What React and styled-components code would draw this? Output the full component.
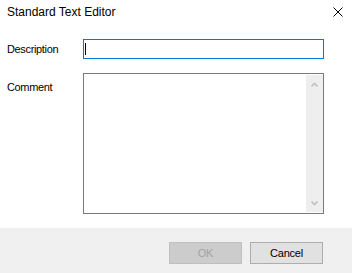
import styled, { createGlobalStyle } from 'styled-components'

const GlobalStyle = createGlobalStyle`
  html, body {
    margin: 0;
    padding: 0;
    background: #fff;
  }
  body {
    font-family: "Liberation Sans", Arial, sans-serif;
    color: #000;
  }
`

const Dialog = styled.div`
  width: 352px;
  height: 273px;
  display: flex;
  flex-direction: column;
  background: #fff;
  overflow: hidden;
`
const Header = styled.div`
  height: 39px;
  display: flex;
  justify-content: space-between;
  align-items: flex-start;
  padding: 4px 9px 0 7px;
  box-sizing: border-box;
`
const Title = styled.div`
  font-size: 12px;
  line-height: 16px;
`
const CloseButton = styled.button`
  border: 0;
  background: none;
  padding: 0;
  margin-top: 3px;
  width: 10px;
  height: 10px;
  display: flex;
  cursor: pointer;
`
const Body = styled.div`
  flex: 1;
  display: grid;
  grid-template-columns: 76px 241px;
  grid-template-rows: 20px 141px;
  row-gap: 14px;
  padding: 0 0 0 7px;
`
const Label = styled.label`
  font-size: 11px;
  letter-spacing: -0.35px;
  line-height: 13px;
  align-self: ${p => (p.$top ? 'start' : 'center')};
  margin-top: ${p => (p.$top ? '8px' : '0')};
`
const InputBox = styled.div`
  display: flex;
  align-items: center;
  border: 1px solid #0078d7;
  box-sizing: border-box;
  height: 20px;
  padding-left: 1px;
`
const Caret = styled.span`
  width: 1px;
  height: 12px;
  background: #000;
`
const Input = styled.input`
  flex: 1;
  min-width: 0;
  border: 0;
  outline: none;
  padding: 0 2px;
  font: 11px "Liberation Sans", Arial, sans-serif;
  caret-color: transparent;
  background: transparent;
`
const TextBox = styled.div`
  display: flex;
  border: 1px solid #7a7a7a;
  box-sizing: border-box;
  height: 141px;
`
const TextArea = styled.textarea`
  flex: 1;
  border: 0;
  outline: none;
  resize: none;
  padding: 2px;
  font: 11px "Liberation Sans", Arial, sans-serif;
`
const ScrollTrack = styled.div`
  width: 17px;
  margin: 1px 0 1px 0;
  background: #eeeeee;
  display: flex;
  flex-direction: column;
  justify-content: space-between;
  align-items: center;
  padding: 7px 0 6px;
  box-sizing: border-box;
`
const Footer = styled.div`
  height: 45px;
  background: #f0f0f0;
  display: flex;
  justify-content: flex-end;
  align-items: flex-start;
  gap: 8px;
  padding: 14px 29px 0 0;
  box-sizing: border-box;
`
const Button = styled.button`
  width: 73px;
  height: 22px;
  box-sizing: border-box;
  padding: 0;
  font: 11px "Liberation Sans", Arial, sans-serif;
  letter-spacing: -0.2px;
  border: 1px solid ${p => (p.disabled ? '#bfbfbf' : '#adadad')};
  background: ${p => (p.disabled ? '#cccccc' : '#e1e1e1')};
  color: ${p => (p.disabled ? '#a3a3a3' : '#000')};
`

function Chevron({ up }) {
  return (
    <svg width="7" height="5" viewBox="0 0 7 5">
      <path
        d={up ? 'M0.5 4.5 L3.5 1.5 L6.5 4.5' : 'M0.5 0.5 L3.5 3.5 L6.5 0.5'}
        fill="none"
        stroke="#c2c2c2"
        strokeWidth="1.6"
      />
    </svg>
  )
}

export default function App() {
  return (
    <Dialog>
      <GlobalStyle />
      <Header>
        <Title>Standard Text Editor</Title>
        <CloseButton aria-label="Close">
          <svg width="10" height="10" viewBox="0 0 10 10">
            <path d="M0.5 0.5 L9.5 9.5 M9.5 0.5 L0.5 9.5" stroke="#000" strokeWidth="1" />
          </svg>
        </CloseButton>
      </Header>
      <Body>
        <Label>Description</Label>
        <InputBox>
          <Caret />
          <Input />
        </InputBox>
        <Label $top>Comment</Label>
        <TextBox>
          <TextArea />
          <ScrollTrack>
            <Chevron up />
            <Chevron />
          </ScrollTrack>
        </TextBox>
      </Body>
      <Footer>
        <Button disabled>OK</Button>
        <Button>Cancel</Button>
      </Footer>
    </Dialog>
  )
}
